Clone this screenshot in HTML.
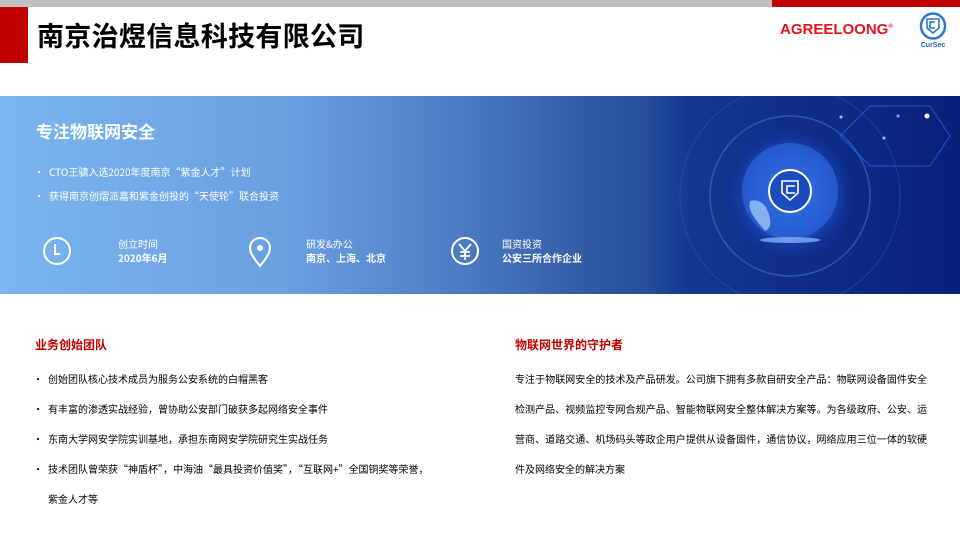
<!DOCTYPE html>
<html><head><meta charset="utf-8"><style>
*{margin:0;padding:0;box-sizing:border-box}
body{width:960px;height:540px;position:relative;overflow:hidden;background:#fff;font-family:"WenQuanYi Zen Hei","Noto Sans CJK SC",sans-serif}
.a{position:absolute;white-space:nowrap;line-height:1.4}
.w{color:#fff}
.n{font-family:"Noto Sans CJK SC",sans-serif}
.li{padding-left:15px}
.li:before{content:"•";position:absolute;left:0}
.r{position:relative}
</style></head><body>
<div class="a" style="left:0;top:0;width:772px;height:7px;background:#bfbfbf"></div>
<div class="a" style="left:772px;top:0;width:188px;height:7px;background:#c00000"></div>
<div class="a" style="left:0;top:7px;width:28px;height:56px;background:#c00000"></div>
<div class="a n" style="left:37px;top:16px;font-size:27px;font-weight:bold;color:#000;letter-spacing:0.3px">南京治煜信息科技有限公司</div>
<div class="a" style="left:780px;top:19px;font-size:15px;font-weight:bold;color:#e3131b;font-family:'Liberation Sans',sans-serif">AGREELOONG<sup style="font-size:6px;vertical-align:6px">®</sup></div>
<svg class="a" style="left:918px;top:12px" width="32" height="38" viewBox="0 0 32 38">
<ellipse cx="15" cy="14" rx="12" ry="12.5" fill="none" stroke="#2a78c8" stroke-width="2.5"/>
<path d="M9 7h12v9l-6 5-6-5z" fill="none" stroke="#2a78c8" stroke-width="1.6"/>
<path d="M17 10h-5v6h5" fill="none" stroke="#2a78c8" stroke-width="1.6"/>
<text x="15" y="35" font-size="7" font-weight="bold" fill="#1f5fae" text-anchor="middle" font-family="Liberation Sans">CurSec</text>
</svg>

<div class="a" style="left:0;top:96px;width:960px;height:198px;background:linear-gradient(90deg,#7ab6ef 0%,#6a9fe0 30%,#4c7cc4 48%,#2d56a0 63%,#143a90 70%,#08217a 100%)"></div>
<svg class="a" style="left:600px;top:96px" width="360" height="198" viewBox="0 0 360 198">
<defs><radialGradient id="g" cx="0.5" cy="0.5" r="0.5"><stop offset="0" stop-color="#4a8af0"/><stop offset="0.6" stop-color="#1c4ac0"/><stop offset="1" stop-color="#0a2a90" stop-opacity="0"/></radialGradient>
<linearGradient id="f" x1="0" x2="1"><stop offset="0" stop-color="#2d56a0"/><stop offset="0.25" stop-color="#2d56a0" stop-opacity="0"/></linearGradient></defs>
<circle cx="190" cy="100" r="110" fill="none" stroke="#2a5ad0" stroke-width="1" opacity="0.5"/>
<circle cx="190" cy="100" r="80" fill="none" stroke="#3a70e0" stroke-width="1.5" opacity="0.6"/>
<ellipse cx="190" cy="98" rx="68" ry="70" fill="url(#g)"/>
<circle cx="190" cy="95" r="48" fill="#2a66d8" opacity="0.7"/>
<path d="M150 105c10-3 18 5 20 18 2 10-5 12-5 12-8-10-18-20-15-30z" fill="#9cc4f4" opacity="0.8"/>
<circle cx="190" cy="95" r="21" fill="#1a4cc0" stroke="#fff" stroke-width="2"/>
<path d="M182 85h16v12l-8 7-8-7z" fill="none" stroke="#fff" stroke-width="1.6"/>
<path d="M195 90h-8v7h8" fill="none" stroke="#fff" stroke-width="1.6"/>
<ellipse cx="190" cy="144" rx="30" ry="3" fill="#8fc0ff" opacity="0.7"/>
<path d="M240 40l30-30h60l20 30-20 30h-60z" fill="none" stroke="#2f6ae8" stroke-width="1" opacity="0.7"/>
<circle cx="327" cy="20" r="2.5" fill="#fff"/><circle cx="298" cy="20" r="1.5" fill="#8ac"/><circle cx="284" cy="42" r="1.5" fill="#8cf"/><circle cx="241" cy="21" r="1.5" fill="#8cf"/>
<rect x="0" y="0" width="360" height="198" fill="url(#f)"/>
</svg>
<div class="a w n" style="left:36px;top:119px;font-size:17px;font-weight:bold">专注物联网安全</div>
<div class="a w li" style="left:34px;top:165px;font-size:10px;line-height:14px">CTO王骕入选2020年度南京“紫金人才”计划</div>
<div class="a w li" style="left:34px;top:189px;font-size:10px;line-height:14px">获得南京创熠派嘉和紫金创投的“天使轮”联合投资</div>
<svg class="a" style="left:42px;top:236px" width="30" height="30"><circle cx="15" cy="15" r="13" fill="none" stroke="#fff" stroke-width="2"/><path d="M13 8v10h5" fill="none" stroke="#fff" stroke-width="2"/></svg>
<svg class="a" style="left:248px;top:236px" width="24" height="32"><path d="M12 30C4 20 2 16 2 12a10 10 0 0 1 20 0c0 4-2 8-10 18z" fill="none" stroke="#fff" stroke-width="2"/><circle cx="12" cy="12" r="3" fill="#fff"/></svg>
<svg class="a" style="left:450px;top:236px" width="30" height="30"><circle cx="15" cy="15" r="13" fill="none" stroke="#fff" stroke-width="2"/><path d="M9 8l6 7 6-7M15 15v9M10 16h10M10 20h10" fill="none" stroke="#fff" stroke-width="1.8"/></svg>
<div class="a w" style="left:118px;top:237px;font-size:10px;line-height:14px">创立时间</div>
<div class="a w" style="left:118px;top:251px;font-size:10px;line-height:14px;font-weight:bold">2020年6月</div>
<div class="a w" style="left:306px;top:237px;font-size:10px;line-height:14px">研发&amp;办公</div>
<div class="a w" style="left:306px;top:251px;font-size:10px;line-height:14px;font-weight:bold">南京、上海、北京</div>
<div class="a w" style="left:502px;top:237px;font-size:10px;line-height:14px">国资投资</div>
<div class="a w" style="left:502px;top:251px;font-size:10px;line-height:14px;font-weight:bold">公安三所合作企业</div>

<div class="a n" style="left:35px;top:337px;font-size:12px;font-weight:bold;color:#c00000">业务创始团队</div>
<div style="position:absolute;left:33px;top:364px;font-size:10px;color:#000;line-height:30px;white-space:nowrap">
<div class="li r">创始团队核心技术成员为服务公安系统的白帽黑客</div>
<div class="li r">有丰富的渗透实战经验，曾协助公安部门破获多起网络安全事件</div>
<div class="li r">东南大学网安学院实训基地，承担东南网安学院研究生实战任务</div>
<div class="li r">技术团队曾荣获“神盾杯”，中海油“最具投资价值奖”，“互联网+”全国铜奖等荣誉，</div>
<div style="padding-left:15px">紫金人才等</div>
</div>
<div class="a n" style="left:515px;top:337px;font-size:12px;font-weight:bold;color:#c00000">物联网世界的守护者</div>
<div style="position:absolute;left:515px;top:364px;width:412px;font-size:10px;color:#000;line-height:30px;text-align:justify">专注于物联网安全的技术及产品研发。公司旗下拥有多款自研安全产品：物联网设备固件安全检测产品、视频监控专网合规产品、智能物联网安全整体解决方案等。为各级政府、公安、运营商、道路交通、机场码头等政企用户提供从设备固件，通信协议，网络应用三位一体的软硬件及网络安全的解决方案</div>
</body></html>
